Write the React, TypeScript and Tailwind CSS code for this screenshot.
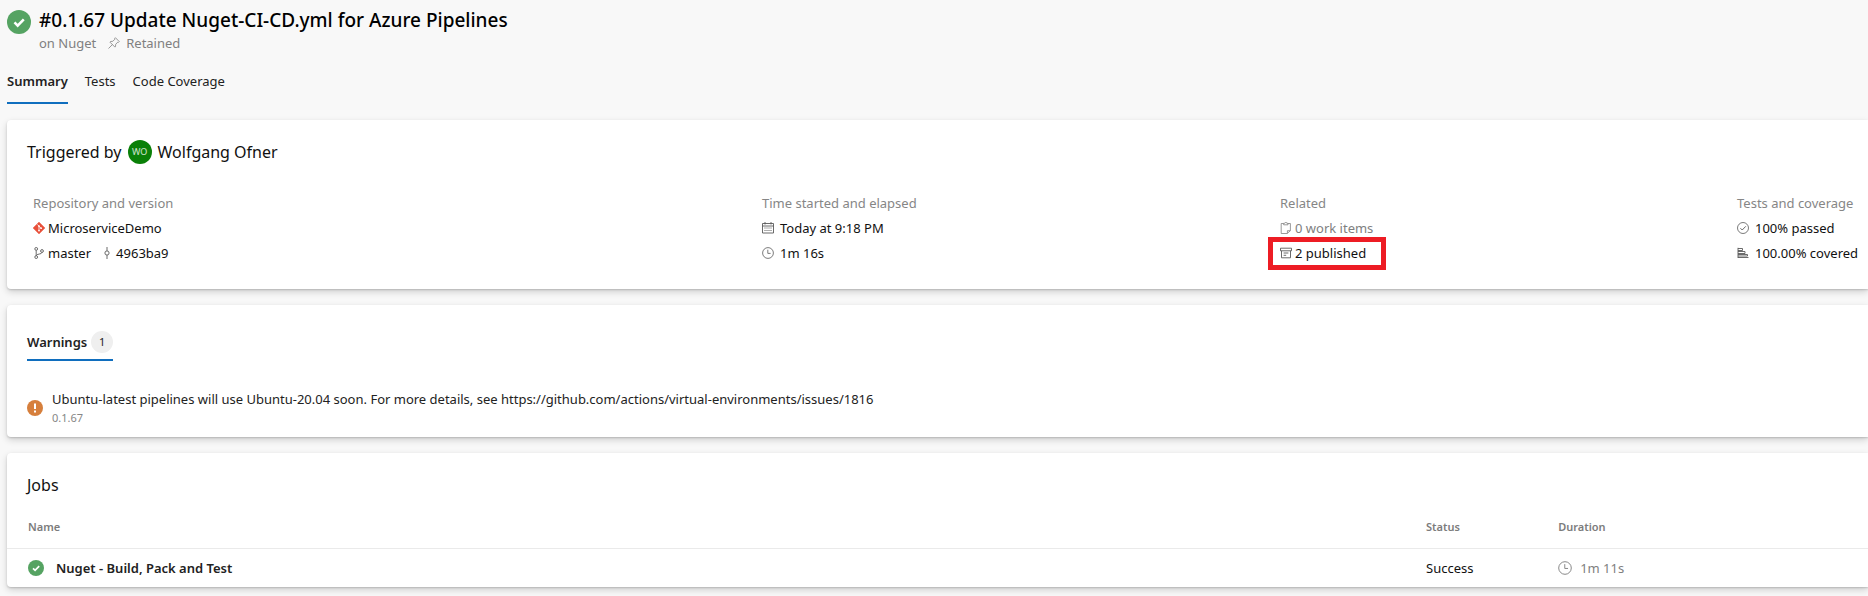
import type { ReactNode } from "react";

function SuccessIcon({ className }: { className: string }) {
  return (
    <svg viewBox="0 0 16 16" className={className} role="img" aria-label="Success">
      <circle cx="8" cy="8" r="8" fill="#55a362" />
      <path d="M5 8.3 7.1 10.4 11.2 6.2" fill="none" stroke="#fff" strokeWidth="1.7" />
    </svg>
  );
}

function WarningIcon() {
  return (
    <svg viewBox="0 0 16 16" className="size-4 shrink-0" role="img" aria-label="Warning">
      <circle cx="8" cy="8" r="8" fill="#d67f3c" />
      <path d="M7 3.6h2V9H7zM7 10.6h2v1.9H7z" fill="#fff" />
    </svg>
  );
}

function Stroke({ children, className = "size-3" }: { children: ReactNode; className?: string }) {
  return (
    <svg viewBox="0 0 12 12" className={`shrink-0 ${className}`} fill="none" stroke="currentColor" aria-hidden="true">
      {children}
    </svg>
  );
}

const PinIcon = () => (
  <Stroke>
    <path d="M7.4.7 11.3 4.6 10.6 5.3 9.8 5.1 7.7 7.3 7.5 9.6 6.9 10.1 1.9 5.1 2.5 4.5 4.8 4.3 6.9 2.2 6.7 1.4zM4.4 7.6.5 11.5" strokeWidth=".8" />
  </Stroke>
);

const GitIcon = () => (
  <svg viewBox="0 0 12 12" className="size-3 shrink-0" aria-hidden="true">
    <path d="M6 0 12 6 6 12 0 6z" fill="#e8503a" stroke="#e8503a" strokeWidth=".4" strokeLinejoin="round" />
    <path d="M4.3 2.4 6 4.1V8.7M6 4.3 8 6.2" stroke="#fff" strokeWidth=".8" fill="none" />
    <circle cx="6" cy="4.1" r=".9" fill="#fff" />
    <circle cx="6" cy="8.6" r=".9" fill="#fff" />
    <circle cx="8.1" cy="6.2" r=".9" fill="#fff" />
  </svg>
);

const BranchIcon = () => (
  <Stroke>
    <circle cx="3.2" cy="1.9" r="1.4" strokeWidth=".9" />
    <circle cx="3.2" cy="10.1" r="1.4" strokeWidth=".9" />
    <circle cx="9" cy="4" r="1.4" strokeWidth=".9" />
    <path d="M3.2 3.3V8.7M9 5.4C9 7.6 3.4 6.5 3.2 8.7" strokeWidth=".9" />
  </Stroke>
);

const CommitIcon = () => (
  <Stroke>
    <circle cx="6" cy="6" r="2.1" strokeWidth=".9" />
    <path d="M6 0V3.9M6 8.1V12" strokeWidth=".9" />
  </Stroke>
);

const CalendarIcon = () => (
  <Stroke>
    <path d="M.5 1.5h11v9.5H.5zM.5 4h11M3 0v2.5M9 0v2.5" strokeWidth=".9" />
    <path d="M2.5 6h7M2.5 8.5h7" strokeWidth="1" strokeDasharray="1 1" />
  </Stroke>
);

const ClockIcon = ({ className }: { className?: string }) => (
  <Stroke className={className}>
    <circle cx="6" cy="6" r="5.4" strokeWidth=".8" />
    <path d="M5.8 2.7V6.4H8.6" strokeWidth=".8" />
  </Stroke>
);

const ClipboardIcon = () => (
  <Stroke>
    <path d="M3.6 1.5H1.2v10H7.2L10.4 8.7V1.5H8M3.6 2.8V1.3H4.7C4.7 0 6.9 0 6.9 1.3H8v1.5zM7.4 11.3V8.7h2.8" strokeWidth=".8" />
  </Stroke>
);

const ArtifactIcon = () => (
  <Stroke>
    <path d="M.5 1.2h11v2.6H.5zM1.5 3.8v7h9v-7M3.6 6h4.8M3.6 8.3h2.6" strokeWidth=".9" />
  </Stroke>
);

const PassedIcon = () => (
  <Stroke>
    <circle cx="6" cy="6" r="5.5" strokeWidth=".8" />
    <path d="M3.4 6.2 5.2 8 8.8 4.3" strokeWidth=".9" />
  </Stroke>
);

const CoverageIcon = () => (
  <Stroke>
    <path d="M1 .8V11M1 10.5h10.5M1 1.5h4.5v2H1M1 4.5h7v2H1M1 7.5h9.5v1.5H1" strokeWidth=".9" />
  </Stroke>
);

const card = "rounded-l bg-white shadow-[0_3px_7px_rgba(0,0,0,0.16),0_1px_2px_rgba(0,0,0,0.16)]";

function Fact({ icon, children, muted = false }: { icon: ReactNode; children: ReactNode; muted?: boolean }) {
  return (
    <span className={`flex items-center gap-[3px] ${muted ? "text-[#808080]" : "text-[#5a5a5a]"}`}>
      {icon}
      <span className={muted ? "" : "text-[#111]"}>{children}</span>
    </span>
  );
}

function Column({ title, children }: { title: string; children: ReactNode }) {
  return (
    <div className="flex flex-col items-start gap-[5px] whitespace-nowrap">
      <h3 className="text-[#868686]">{title}</h3>
      {children}
    </div>
  );
}

export default function App() {
  return (
    <div className="min-h-screen bg-[#f8f8f8] pb-2 pl-[7px] font-['Noto_Sans',sans-serif] text-[13px] leading-5 text-[#222]">
      <header className="flex gap-2 pt-2">
        <SuccessIcon className="mt-0.5 size-6 shrink-0" />
        <div>
          <h1 className="text-[19px] leading-6 font-medium text-black">#0.1.67 Update Nuget-CI-CD.yml for Azure Pipelines</h1>
          <p className="flex items-center pt-px text-[#808080]">
            on Nuget
            <span className="ml-3 flex items-center gap-1.5">
              <PinIcon />
              Retained
            </span>
          </p>
        </div>
      </header>

      <nav className="mt-4 flex gap-[17px]" aria-label="Run">
        <a href="#summary" aria-current="page" className="border-b-2 border-[#106ebe] pt-0.5 pb-[11px] font-semibold">
          Summary
        </a>
        <a href="#tests" className="pt-0.5">Tests</a>
        <a href="#coverage" className="pt-0.5">Code Coverage</a>
      </nav>

      <main className="mt-4 flex flex-col gap-4">
        <section className={`${card} pt-5 pb-[26px] pl-5`}>
          <h2 className="flex items-center gap-1.5 text-base leading-6 text-[#111]">
            Triggered by
            <span className="flex size-6 items-center justify-center rounded-full bg-[#0a8008] text-[9px] text-white/80">WO</span>
            Wolfgang Ofner
          </h2>
          <div className="mt-[29px] grid grid-cols-[729fr_518fr_457fr_131fr] pl-1.5">
            <Column title="Repository and version">
              <Fact icon={<GitIcon />}>MicroserviceDemo</Fact>
              <div className="flex gap-2.5">
                <Fact icon={<BranchIcon />}>master</Fact>
                <Fact icon={<CommitIcon />}>4963ba9</Fact>
              </div>
            </Column>
            <Column title="Time started and elapsed">
              <Fact icon={<CalendarIcon />}><span className="pl-[3px]">Today at 9:18 PM</span></Fact>
              <Fact icon={<ClockIcon />}><span className="pl-[3px]">1m 16s</span></Fact>
            </Column>
            <Column title="Related">
              <Fact icon={<ClipboardIcon />} muted>0 work items</Fact>
              <div className="relative">
                <Fact icon={<ArtifactIcon />}>2 published</Fact>
                <span className="absolute -top-1.5 -right-5 -bottom-[7px] -left-3 border-5 border-[#ed1c24]" />
              </div>
            </Column>
            <Column title="Tests and coverage">
              <Fact icon={<PassedIcon />}><span className="pl-[3px]">100% passed</span></Fact>
              <Fact icon={<CoverageIcon />}><span className="pl-[3px]">100.00% covered</span></Fact>
            </Column>
          </div>
        </section>

        <section className={`${card} pt-[26px] pb-[11px] pl-5`}>
          <div className="flex">
            <h2 className="flex items-center gap-1 border-b-2 border-[#106ebe] pb-1.5 font-semibold">
              Warnings
              <span className="flex size-[22px] items-center justify-center rounded-full bg-[#efefef] text-[11px] font-normal">1</span>
            </h2>
          </div>
          <div className="mt-7 flex items-center gap-[9px]">
            <WarningIcon />
            <div>
              <p>Ubuntu-latest pipelines will use Ubuntu-20.04 soon. For more details, see https://github.com/actions/virtual-environments/issues/1816</p>
              <p className="pt-px text-[11px] leading-4 text-[#868686]">0.1.67</p>
            </div>
          </div>
        </section>

        <section className={`${card} pt-5`}>
          <h2 className="pl-5 text-base leading-6 text-[#111]">Jobs</h2>
          <table className="mt-4 w-full table-fixed text-left">
            <thead className="text-[11px] text-[#7c7c7c]">
              <tr className="h-[35px] border-b border-[#eaeaea] align-top">
                <th className="w-[76.25%] pt-1 pl-[21px] font-semibold">Name</th>
                <th className="w-[7.1%] pt-1 font-semibold">Status</th>
                <th className="pt-1 font-semibold">Duration</th>
              </tr>
            </thead>
            <tbody>
              <tr className="h-[39px]">
                <td className="pl-[21px]">
                  <a href="#job" className="flex items-center gap-3 font-semibold text-[#222]">
                    <SuccessIcon className="size-4 shrink-0" />
                    Nuget - Build, Pack and Test
                  </a>
                </td>
                <td className="text-[#111]">Success</td>
                <td className="text-[#808080]">
                  <span className="flex items-center gap-2">
                    <ClockIcon className="size-3.5" />
                    1m 11s
                  </span>
                </td>
              </tr>
            </tbody>
          </table>
        </section>
      </main>
    </div>
  );
}
